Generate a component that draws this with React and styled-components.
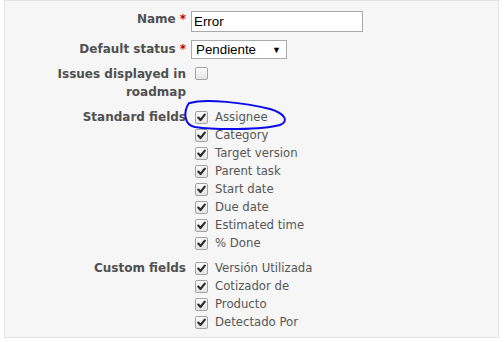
import React from "react";
import styled, { createGlobalStyle } from "styled-components";

const GlobalStyle = createGlobalStyle`
  html, body { margin: 0; padding: 0; background: #ffffff; }
  body { font-family: Verdana, "DejaVu Sans", sans-serif; }
`;

const Page = styled.div`
  position: relative;
  width: 504px;
  height: 342px;
  overflow: hidden;
`;

const Box = styled.div`
  margin-left: 4px;
  width: 493px;
  background: #f6f6f6;
  border: 1px solid #e4e4e4;
  padding: 9px 0 6px 0;
  display: flex;
  flex-direction: column;
`;

const Row = styled.div`
  display: grid;
  grid-template-columns: 181px 1fr;
  column-gap: 5px;
  align-items: start;
  margin-top: ${(p) => p.$mt || 0}px;
`;

const Label = styled.div`
  font-family: "DejaVu Sans", Verdana, sans-serif;
  font-weight: bold;
  font-size: 12px;
  line-height: 18px;
  color: #505050;
  text-align: right;
`;

const Req = styled.span`
  color: #bb0000;
  margin-left: 4px;
`;

const TextInput = styled.div`
  box-sizing: border-box;
  margin-top: 1px;
  width: 172px;
  height: 21px;
  background: #fff;
  border: 1px solid #a9a9a9;
  font-family: "Liberation Sans", Arial, sans-serif;
  font-size: 13.33px;
  color: #000;
  line-height: 19px;
  padding-left: 2px;
`;

const FakeSelect = styled.div`
  box-sizing: border-box;
  width: 96px;
  height: 19px;
  background: #fff;
  border: 1px solid #a9a9a9;
  font-family: "Liberation Sans", Arial, sans-serif;
  font-size: 13.33px;
  color: #000;
  display: flex;
  align-items: center;
  justify-content: space-between;
  padding: 0 5px 0 4px;
`;

const Arrow = styled.span`
  font-size: 9px;
  color: #000;
`;

const List = styled.div`
  display: flex;
  flex-direction: column;
`;

const Item = styled.div`
  display: flex;
  align-items: center;
  height: 18px;
  font-family: "DejaVu Sans", Verdana, sans-serif;
  font-size: 11.7px;
  color: #555;
`;

const Box13 = styled.span`
  box-sizing: border-box;
  display: inline-flex;
  align-items: center;
  justify-content: center;
  width: 13px;
  height: 13px;
  margin: ${(p) => (p.$top ? "1px 0 0 4px" : "0 7px 0 4px")};
  border: 1px solid #a3a3a3;
  border-radius: 2px;
  background: linear-gradient(#fcfcfc, #e4e4e4);
  flex-shrink: 0;
`;

function Check({ checked, top }) {
  return (
    <Box13 $top={top}>
      {checked && (
        <svg width="9" height="9" viewBox="0 0 9 9">
          <path d="M1.3 4.6 L3.5 7 L7.8 1.6" fill="none" stroke="#2e2e2e" strokeWidth="2.2" strokeLinecap="round" strokeLinejoin="round" />
        </svg>
      )}
    </Box13>
  );
}

const Overlay = styled.svg`
  position: absolute;
  left: 0;
  top: 0;
  pointer-events: none;
`;

const standard = [
  "Assignee",
  "Category",
  "Target version",
  "Parent task",
  "Start date",
  "Due date",
  "Estimated time",
  "% Done",
];
const custom = ["Versión Utilizada", "Cotizador de", "Producto", "Detectado Por"];

export default function App() {
  return (
    <Page>
      <GlobalStyle />
      <Box>
        <Row>
          <Label>
            Name<Req>*</Req>
          </Label>
          <TextInput>Error</TextInput>
        </Row>
        <Row $mt={8}>
          <Label>
            Default status<Req>*</Req>
          </Label>
          <FakeSelect>
            <span>Pendiente</span>
            <Arrow>▼</Arrow>
          </FakeSelect>
        </Row>
        <Row $mt={6}>
          <Label>
            Issues displayed in
            <br />
            roadmap
          </Label>
          <div>
            <Check top />
          </div>
        </Row>
        <Row $mt={7}>
          <Label>Standard fields</Label>
          <List>
            {standard.map((s) => (
              <Item key={s}>
                <Check checked />
                {s}
              </Item>
            ))}
          </List>
        </Row>
        <Row $mt={7}>
          <Label>Custom fields</Label>
          <List>
            {custom.map((s) => (
              <Item key={s}>
                <Check checked />
                {s}
              </Item>
            ))}
          </List>
        </Row>
      </Box>
      <Overlay width="504" height="342" viewBox="0 0 504 342">
        <path
          d="M190 103 C 205 98, 245 103, 270 109 C 284 113, 290 121, 280 125 C 262 130, 215 130, 195 127 C 184 125, 183 112, 189 103"
          fill="none"
          stroke="#0a0ae8"
          strokeWidth="2"
          strokeLinecap="round"
        />
      </Overlay>
    </Page>
  );
}
